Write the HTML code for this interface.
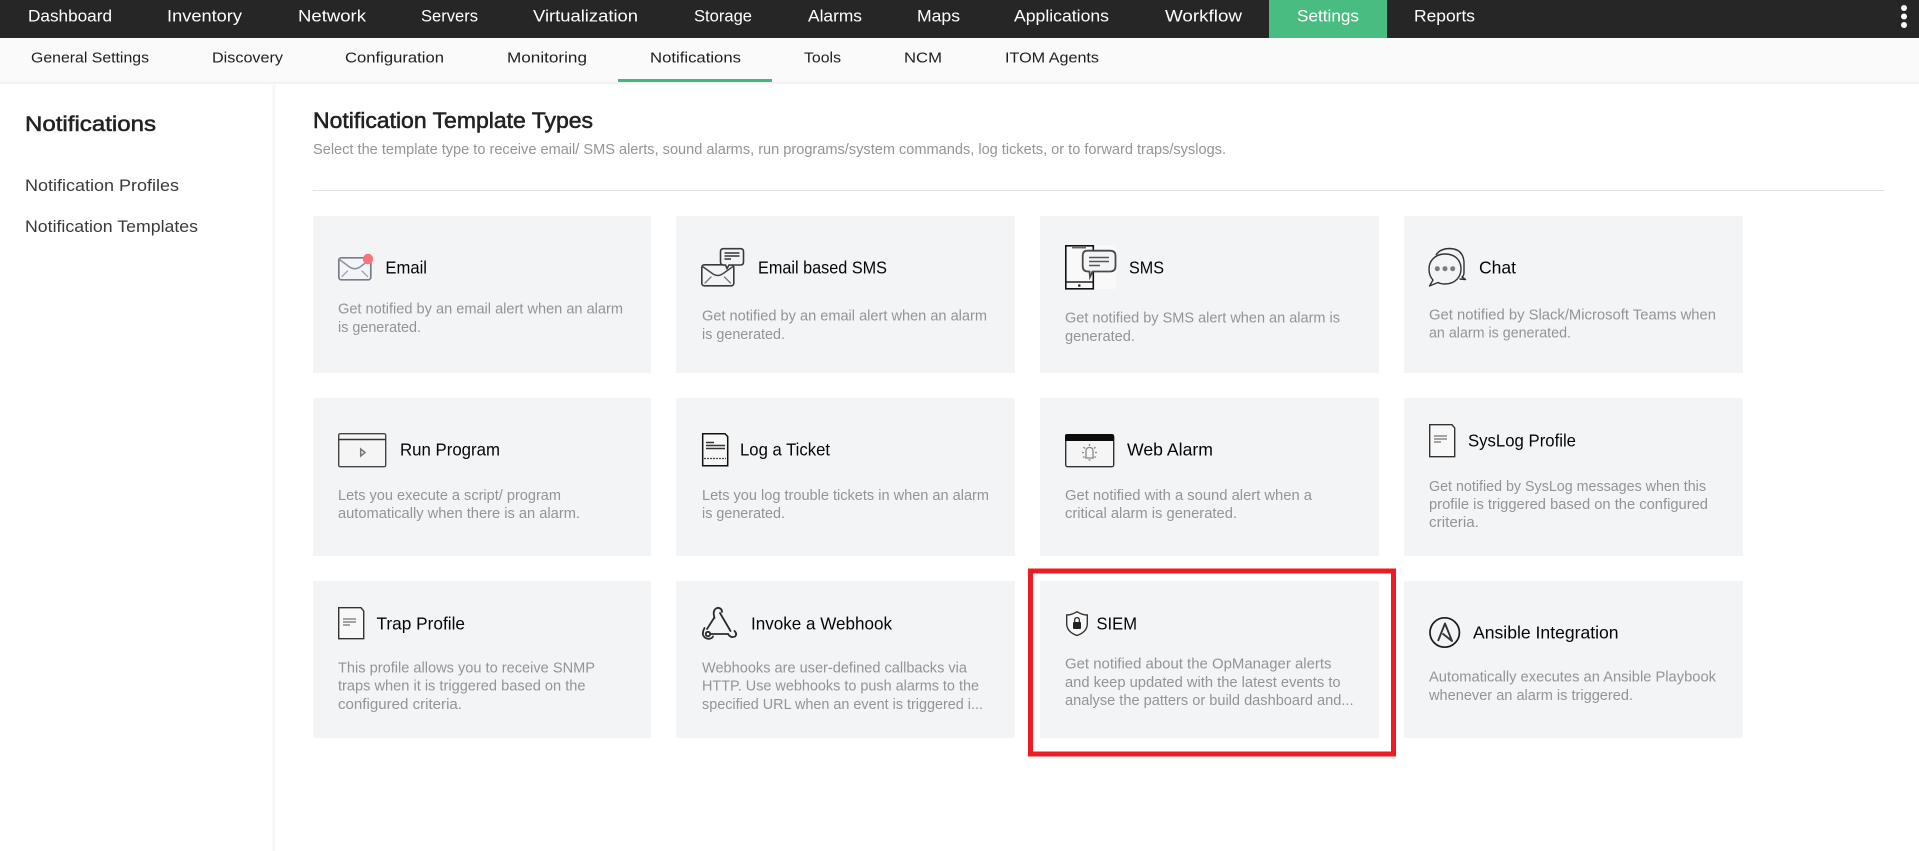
<!DOCTYPE html>
<html lang="en">
<head>
<meta charset="utf-8">
<title>Notification Template Types</title>
<style>
html,body{margin:0;padding:0;background:#fff;width:1919px;height:851px;overflow:hidden}
svg{display:block}
text{font-family:"Liberation Sans",Arial,sans-serif}
.n{font-size:17px;fill:#fff}
.s{font-size:15px;fill:#1e1e1e}
.t{font-size:17.5px;fill:#050505}
.d{font-size:14.7px;fill:#949494}
.l{font-size:16.8px;fill:#3a3a3a}
</style>
</head>
<body>
<svg xmlns="http://www.w3.org/2000/svg" width="1919" height="851" viewBox="0 0 1919 851">
<defs>
<linearGradient id="gv" x1="0" y1="0" x2="0" y2="1"><stop offset="0" stop-color="#ececec"/><stop offset="1" stop-color="#fff"/></linearGradient>
<linearGradient id="gh" x1="0" y1="0" x2="1" y2="0"><stop offset="0" stop-color="#fff"/><stop offset="1" stop-color="#f2f2f2"/></linearGradient>
</defs>
<rect width="1919" height="851" fill="#fff"/>
<!-- sidebar edge -->
<rect x="271" y="82" width="4" height="769" fill="url(#gh)"/>
<!-- top bar -->
<rect width="1919" height="38" fill="#262626"/>
<rect x="1269" width="118" height="38" fill="#48bc81"/>
<g class="nav">
<text class="n" x="28" y="21.7" textLength="84" lengthAdjust="spacingAndGlyphs">Dashboard</text>
<text class="n" x="167" y="21.7" textLength="75" lengthAdjust="spacingAndGlyphs">Inventory</text>
<text class="n" x="298" y="21.7" textLength="68" lengthAdjust="spacingAndGlyphs">Network</text>
<text class="n" x="421" y="21.7" textLength="57" lengthAdjust="spacingAndGlyphs">Servers</text>
<text class="n" x="533" y="21.7" textLength="105" lengthAdjust="spacingAndGlyphs">Virtualization</text>
<text class="n" x="694" y="21.7" textLength="58" lengthAdjust="spacingAndGlyphs">Storage</text>
<text class="n" x="808" y="21.7" textLength="54" lengthAdjust="spacingAndGlyphs">Alarms</text>
<text class="n" x="917" y="21.7" textLength="43" lengthAdjust="spacingAndGlyphs">Maps</text>
<text class="n" x="1014" y="21.7" textLength="95" lengthAdjust="spacingAndGlyphs">Applications</text>
<text class="n" x="1165" y="21.7" textLength="77" lengthAdjust="spacingAndGlyphs">Workflow</text>
<text class="n" x="1297" y="21.7" textLength="62" lengthAdjust="spacingAndGlyphs">Settings</text>
<text class="n" x="1414" y="21.7" textLength="61" lengthAdjust="spacingAndGlyphs">Reports</text>
</g>
<circle cx="1904" cy="8" r="3" fill="#fff"/><circle cx="1904" cy="16.5" r="3" fill="#fff"/><circle cx="1904" cy="25" r="3" fill="#fff"/>
<!-- sub nav -->
<rect y="38" width="1919" height="44" fill="#fafafa"/>
<rect y="82" width="1919" height="3" fill="url(#gv)"/>
<rect x="618" y="79" width="154" height="3" fill="#45b680"/>
<text class="s" x="31" y="62.7" textLength="118" lengthAdjust="spacingAndGlyphs">General Settings</text>
<text class="s" x="212" y="62.7" textLength="71" lengthAdjust="spacingAndGlyphs">Discovery</text>
<text class="s" x="345" y="62.7" textLength="99" lengthAdjust="spacingAndGlyphs">Configuration</text>
<text class="s" x="507" y="62.7" textLength="80" lengthAdjust="spacingAndGlyphs">Monitoring</text>
<text class="s" x="650" y="62.7" textLength="91" lengthAdjust="spacingAndGlyphs">Notifications</text>
<text class="s" x="804" y="62.7" textLength="37" lengthAdjust="spacingAndGlyphs">Tools</text>
<text class="s" x="904" y="62.7" textLength="38" lengthAdjust="spacingAndGlyphs">NCM</text>
<text class="s" x="1005" y="62.7" textLength="94" lengthAdjust="spacingAndGlyphs">ITOM Agents</text>
<!-- sidebar -->
<text x="25" y="131" font-size="21.5" fill="#222" stroke="#222" stroke-width=".55" textLength="131" lengthAdjust="spacingAndGlyphs">Notifications</text>
<text class="l" x="25" y="191" textLength="154" lengthAdjust="spacingAndGlyphs">Notification Profiles</text>
<text class="l" x="25" y="232" textLength="173" lengthAdjust="spacingAndGlyphs">Notification Templates</text>
<!-- heading -->
<text x="313" y="128" font-size="22" fill="#222" stroke="#222" stroke-width=".55" textLength="280" lengthAdjust="spacingAndGlyphs">Notification Template Types</text>
<text class="d" x="313" y="154" textLength="913" lengthAdjust="spacingAndGlyphs">Select the template type to receive email/ SMS alerts, sound alarms, run programs/system commands, log tickets, or to forward traps/syslogs.</text>
<rect x="313" y="190" width="1571" height="1" fill="#e2e2e2"/>
<!-- red highlight -->
<rect x="1030.5" y="571" width="363" height="183" fill="#fff" stroke="#ed1c24" stroke-width="5"/>
<!-- cards -->
<g fill="#f3f4f6">
<rect x="313" y="216" width="338" height="157"/><rect x="676" y="216" width="339" height="157"/><rect x="1040" y="216" width="339" height="157"/><rect x="1404" y="216" width="339" height="157"/>
<rect x="313" y="398" width="338" height="158"/><rect x="676" y="398" width="339" height="158"/><rect x="1040" y="398" width="339" height="158"/><rect x="1404" y="398" width="339" height="158"/>
<rect x="313" y="581" width="338" height="157"/><rect x="676" y="581" width="339" height="157"/><rect x="1040" y="581" width="339" height="157"/><rect x="1404" y="581" width="339" height="157"/>
</g>

<!-- Email -->
<g fill="none" stroke-linecap="round">
<rect x="338.8" y="257.8" width="32" height="22" rx="2.5" stroke="#777c8c" stroke-width="1.7"/>
<path d="M339.5 259.5 L349.5 267 Q354.7 270.5 360 267 L366 262.5" stroke="#8b8f9c" stroke-width="1.5"/>
<path d="M342 276.5 L347.5 271 M367.5 276.5 L362 271" stroke="#a0a3ad" stroke-width="1.3"/>
</g>
<circle cx="368" cy="259" r="5.2" fill="#fb7479"/>
<text class="t" x="385.4" y="273.4" textLength="41.6" lengthAdjust="spacingAndGlyphs">Email</text>
<text class="d" x="338" y="313.7" textLength="285" lengthAdjust="spacingAndGlyphs">Get notified by an email alert when an alarm</text>
<text class="d" x="338" y="332" textLength="83" lengthAdjust="spacingAndGlyphs">is generated.</text>

<!-- Email based SMS -->
<g fill="none" stroke-linecap="round">
<rect x="701.8" y="264.8" width="32" height="21" rx="2.5" stroke="#3a3a3a" stroke-width="1.6"/>
<path d="M702.5 266.5 L713 274 Q717.7 277 722.5 274 L733 266.5" stroke="#444" stroke-width="1.4"/>
<path d="M705 283 L711 277 M730.5 283 L724.5 277" stroke="#777" stroke-width="1.3"/>
<path d="M723.5 248.7 H740.5 Q743.5 248.7 743.5 251.7 V262 Q743.5 265 740.5 265 H729 L727 268.5 L725.5 265 H723.5 Q720.5 265 720.5 262 V251.7 Q720.5 248.7 723.5 248.7Z" fill="#f3f4f6" stroke="#3a3a3a" stroke-width="1.6"/>
<path d="M724.5 253 H739.5 M724.5 256 H739.5 M724.5 259 H731" stroke="#333" stroke-width="1.5" stroke-linecap="butt"/>
</g>
<text class="t" x="758" y="273.4" textLength="129" lengthAdjust="spacingAndGlyphs">Email based SMS</text>
<text class="d" x="702" y="320.7" textLength="285" lengthAdjust="spacingAndGlyphs">Get notified by an email alert when an alarm</text>
<text class="d" x="702" y="339" textLength="83" lengthAdjust="spacingAndGlyphs">is generated.</text>

<!-- SMS -->
<rect x="1065" y="245" width="51" height="44" fill="#f9f9fa"/>
<g fill="none">
<rect x="1065.8" y="245.8" width="27.5" height="43" stroke="#111" stroke-width="1.6" fill="#f9f9fa"/>
<path d="M1065.7 282 H1093" stroke="#222" stroke-width="1.4"/>
<path d="M1072 247.7 H1086" stroke="#666" stroke-width="1.5"/>
<circle cx="1079.3" cy="285.5" r="1.3" fill="#222"/>
<path d="M1087 250.7 H1110 Q1115.5 250.7 1115.5 256 V266 Q1115.5 271.5 1110 271.5 H1092.5 L1090 277 L1089.5 271.5 H1088 Q1082.7 271.5 1082.7 266 V256 Q1082.7 250.7 1087 250.7Z" fill="#f3f4f6" stroke="#4a4a4a" stroke-width="1.8"/>
<path d="M1089 257.5 H1109 M1089 261.5 H1109 M1089 265.5 H1100" stroke="#555" stroke-width="1.6"/>
</g>
<text class="t" x="1129" y="273.4" textLength="35" lengthAdjust="spacingAndGlyphs">SMS</text>
<text class="d" x="1065" y="322.7" textLength="275" lengthAdjust="spacingAndGlyphs">Get notified by SMS alert when an alarm is</text>
<text class="d" x="1065" y="341" textLength="70" lengthAdjust="spacingAndGlyphs">generated.</text>

<!-- Chat -->
<g fill="none" stroke="#333" stroke-width="1.4" stroke-linejoin="round">
<path d="M1436 255 Q1440 248.5 1450 248.5 Q1463 249 1464 262 L1464 272 Q1464 276 1462 277 L1465.5 279.5 L1459.5 279"/>
<path d="M1445 254 C1435 254 1429 261 1429 269 C1429 274 1431 278 1433 280 L1429.5 286 L1438 282.5 C1440 283.5 1443 284 1445 284 C1455 284 1461 277 1461 269 C1461 260 1455 254 1445 254Z" fill="#f3f4f6"/>
</g>
<circle cx="1437.3" cy="268.7" r="2.5" fill="#7c7c7c"/><circle cx="1445" cy="268.7" r="2.5" fill="#7c7c7c"/><circle cx="1452.7" cy="268.7" r="2.5" fill="#7c7c7c"/>
<text class="t" x="1479" y="273.4" textLength="37" lengthAdjust="spacingAndGlyphs">Chat</text>
<text class="d" x="1429" y="319.7" textLength="287" lengthAdjust="spacingAndGlyphs">Get notified by Slack/Microsoft Teams when</text>
<text class="d" x="1429" y="337.7" textLength="142" lengthAdjust="spacingAndGlyphs">an alarm is generated.</text>

<!-- Run Program -->
<rect x="338.7" y="433.7" width="47" height="33" rx="1.5" fill="#f5f5f5" stroke="#444" stroke-width="1.4"/>
<path d="M338.6 439.5 H385.6" stroke="#333" stroke-width="1.5"/>
<path d="M360.7 449 L365 452.5 L360.7 456 Z" fill="none" stroke="#777" stroke-width="1.5"/>
<text class="t" x="400" y="455.4" textLength="100" lengthAdjust="spacingAndGlyphs">Run Program</text>
<text class="d" x="338" y="500" textLength="223" lengthAdjust="spacingAndGlyphs">Lets you execute a script/ program</text>
<text class="d" x="338" y="518" textLength="242" lengthAdjust="spacingAndGlyphs">automatically when there is an alarm.</text>

<!-- Log a Ticket -->
<path d="M702.7 433.7 H725 L727.7 436.5 V465.7 H702.7Z" fill="#f7f7f7" stroke="#111" stroke-width="1.5"/>
<path d="M706 442.5 H714 M706 445.5 H725 M706 448.5 H725" stroke="#333" stroke-width="1.5"/>
<path d="M704 458.5 H726" stroke="#444" stroke-width="1.3" stroke-dasharray="2 1"/>
<text class="t" x="740" y="455.4" textLength="90" lengthAdjust="spacingAndGlyphs">Log a Ticket</text>
<text class="d" x="702" y="500" textLength="287" lengthAdjust="spacingAndGlyphs">Lets you log trouble tickets in when an alarm</text>
<text class="d" x="702" y="518" textLength="83" lengthAdjust="spacingAndGlyphs">is generated.</text>

<!-- Web Alarm -->
<rect x="1065.7" y="434.7" width="48" height="32" rx="2" fill="#f5f5f5" stroke="#333" stroke-width="1.4"/>
<path d="M1065 441 V436 Q1065 434 1067 434 H1112 Q1114 434 1114 436 V441Z" fill="#0c0c0c"/>
<g fill="none" stroke="#888" stroke-width="1.3">
<path d="M1086 458 V451 Q1086 447.5 1089.5 447.5 Q1093 447.5 1093 451 V458 Z M1085 458 H1094 M1088.5 460 H1090.5"/>
<path d="M1089.5 444 V446 M1083.5 447 L1085 448.5 M1095.5 447 L1094 448.5 M1082 452.5 H1084 M1095 452.5 H1097 M1083 457.5 L1084.5 456.5 M1096 457.5 L1094.5 456.5"/>
</g>
<text class="t" x="1127" y="455.4" textLength="86" lengthAdjust="spacingAndGlyphs">Web Alarm</text>
<text class="d" x="1065" y="500" textLength="247" lengthAdjust="spacingAndGlyphs">Get notified with a sound alert when a</text>
<text class="d" x="1065" y="518" textLength="172" lengthAdjust="spacingAndGlyphs">critical alarm is generated.</text>

<!-- SysLog -->
<path d="M1429.7 424.7 H1452 L1454.7 428 V456.7 H1429.7Z" fill="#f8f8f8" stroke="#333" stroke-width="1.4"/>
<path d="M1434 436 H1447 M1434 439 H1447 M1434 442 H1441" stroke="#888" stroke-width="1.6"/>
<text class="t" x="1468" y="446.4" textLength="108" lengthAdjust="spacingAndGlyphs">SysLog Profile</text>
<text class="d" x="1429" y="491" textLength="277" lengthAdjust="spacingAndGlyphs">Get notified by SysLog messages when this</text>
<text class="d" x="1429" y="509" textLength="279" lengthAdjust="spacingAndGlyphs">profile is triggered based on the configured</text>
<text class="d" x="1429" y="527" textLength="50" lengthAdjust="spacingAndGlyphs">criteria.</text>

<!-- Trap -->
<path d="M338.7 607.7 H361 L363.7 611 V638.7 H338.7Z" fill="#f8f8f8" stroke="#333" stroke-width="1.4"/>
<path d="M343 619 H356 M343 622 H356 M343 625 H350" stroke="#888" stroke-width="1.6"/>
<text class="t" x="376.5" y="629.4" textLength="88.5" lengthAdjust="spacingAndGlyphs">Trap Profile</text>
<text class="d" x="338" y="672.7" textLength="257" lengthAdjust="spacingAndGlyphs">This profile allows you to receive SNMP</text>
<text class="d" x="338" y="690.7" textLength="247.5" lengthAdjust="spacingAndGlyphs">traps when it is triggered based on the</text>
<text class="d" x="338" y="709" textLength="124" lengthAdjust="spacingAndGlyphs">configured criteria.</text>

<!-- Webhook -->
<g fill="none" stroke="#2b2b2b" stroke-width="1.8" stroke-linecap="round">
<path d="M714.5 618 Q712 609.5 717.5 607.8 Q722 608 722 612"/>
<path d="M714 618 L707 629"/>
<path d="M720 613 L730.5 631"/>
<circle cx="708" cy="634" r="2.2"/>
<path d="M704.5 628 Q702.3 632 703 635 Q705 639 709 638.8 Q712 638.5 713 636.5"/>
<path d="M711 634 H728"/>
<path d="M728 634 Q731 638.5 735 636.5 Q737.5 634 734.5 631"/>
</g>
<text class="t" x="751" y="629.4" textLength="141" lengthAdjust="spacingAndGlyphs">Invoke a Webhook</text>
<text class="d" x="702" y="672.7" textLength="265" lengthAdjust="spacingAndGlyphs">Webhooks are user-defined callbacks via</text>
<text class="d" x="702" y="690.7" textLength="277" lengthAdjust="spacingAndGlyphs">HTTP. Use webhooks to push alarms to the</text>
<text class="d" x="702" y="709" textLength="281" lengthAdjust="spacingAndGlyphs">specified URL when an event is triggered i...</text>

<!-- SIEM -->
<path d="M1077 611.7 Q1082 615 1087.3 615 V624 Q1087 632 1077 635.5 Q1067 632 1066.7 624 V615 Q1072 615 1077 611.7Z" fill="#f8f8f8" stroke="#333" stroke-width="1.4"/>
<rect x="1073" y="622" width="8" height="7" rx="1" fill="#222"/>
<path d="M1074.7 622 V620 Q1074.7 617.6 1077 617.6 Q1079.3 617.6 1079.3 620 V622" fill="none" stroke="#222" stroke-width="1.2"/>
<text class="t" x="1096.5" y="629.4" textLength="40.5" lengthAdjust="spacingAndGlyphs">SIEM</text>
<text class="d" x="1065" y="668.7" textLength="266.5" lengthAdjust="spacingAndGlyphs">Get notified about the OpManager alerts</text>
<text class="d" x="1065" y="687" textLength="275.6" lengthAdjust="spacingAndGlyphs">and keep updated with the latest events to</text>
<text class="d" x="1065" y="705" textLength="288.5" lengthAdjust="spacingAndGlyphs">analyse the patters or build dashboard and...</text>

<!-- Ansible -->
<circle cx="1444.7" cy="632.5" r="14.7" fill="none" stroke="#1a1a1a" stroke-width="1.7"/>
<path d="M1438 641 L1445 623.5 L1452 641 L1442.5 633.5" fill="none" stroke="#333" stroke-width="1.9" stroke-linejoin="round"/>
<text class="t" x="1473" y="638.4" textLength="145.6" lengthAdjust="spacingAndGlyphs">Ansible Integration</text>
<text class="d" x="1429" y="681.7" textLength="287" lengthAdjust="spacingAndGlyphs">Automatically executes an Ansible Playbook</text>
<text class="d" x="1429" y="700" textLength="204" lengthAdjust="spacingAndGlyphs">whenever an alarm is triggered.</text>
</svg>
</body>
</html>
